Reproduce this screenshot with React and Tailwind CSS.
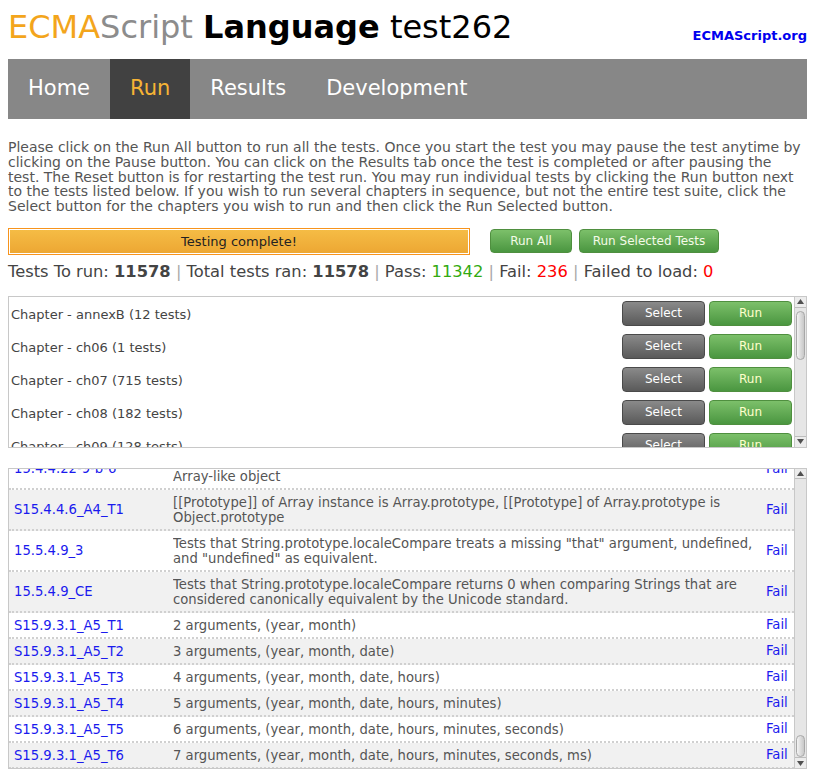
import React from "react";

const chapters = [
  "Chapter - annexB (12 tests)",
  "Chapter - ch06 (1 tests)",
  "Chapter - ch07 (715 tests)",
  "Chapter - ch08 (182 tests)",
  "Chapter - ch09 (128 tests)",
];

const results = [
  ["15.4.4.22-9-b-6", ["Array.prototype.reduceRight - modifications to length will change number of iterations on an", "Array-like object"], false],
  ["S15.4.4.6_A4_T1", ["[[Prototype]] of Array instance is Array.prototype, [[Prototype] of Array.prototype is", "Object.prototype"], true],
  ["15.5.4.9_3", ["Tests that String.prototype.localeCompare treats a missing \"that\" argument, undefined,", "and \"undefined\" as equivalent."], false],
  ["15.5.4.9_CE", ["Tests that String.prototype.localeCompare returns 0 when comparing Strings that are", "considered canonically equivalent by the Unicode standard."], true],
  ["S15.9.3.1_A5_T1", ["2 arguments, (year, month)"], false],
  ["S15.9.3.1_A5_T2", ["3 arguments, (year, month, date)"], true],
  ["S15.9.3.1_A5_T3", ["4 arguments, (year, month, date, hours)"], false],
  ["S15.9.3.1_A5_T4", ["5 arguments, (year, month, date, hours, minutes)"], true],
  ["S15.9.3.1_A5_T5", ["6 arguments, (year, month, date, hours, minutes, seconds)"], false],
  ["S15.9.3.1_A5_T6", ["7 arguments, (year, month, date, hours, minutes, seconds, ms)"], true],
];

function Scrollbar({ thumbTop, thumbHeight }) {
  return (
    <div className="w-[12px] flex flex-col bg-[#e6e6e6] border-l border-[#c8c8c8]">
      <div className="h-[11px] flex items-center justify-center bg-[#ececec] border-b border-[#bdbdbd]">
        <svg width="7" height="5" viewBox="0 0 7 5"><path d="M3.5 0L7 5H0z" fill="#505050" /></svg>
      </div>
      <div className="flex-1 flex flex-col px-[1px]">
        <div style={{ height: thumbTop }} />
        <div
          className="rounded-[5px] border border-[#a8a8a8] bg-gradient-to-r from-[#f4f4f4] via-[#dcdcdc] to-[#c8c8c8]"
          style={{ height: thumbHeight }}
        />
        <div className="flex-1" />
      </div>
      <div className="h-[11px] flex items-center justify-center bg-[#ececec] border-t border-[#bdbdbd]">
        <svg width="7" height="5" viewBox="0 0 7 5"><path d="M0 0H7L3.5 5z" fill="#505050" /></svg>
      </div>
    </div>
  );
}

export default function App() {
  const font = { fontFamily: '"DejaVu Sans", Verdana, sans-serif' };
  return (
    <div className="bg-white w-[815px] h-[780px] overflow-hidden px-[8px] text-[#444]" style={font}>
      {/* Header */}
      <div className="flex items-start justify-between h-[59px]">
        <div className="text-[32px] leading-none pt-[11px] whitespace-nowrap">
          <span className="text-[#f3a51c]">ECMA</span>
          <span className="text-[#8c8c8c]">Script</span>{" "}
          <span className="text-black font-bold">Language</span>{" "}
          <span className="text-black">test262</span>
        </div>
        <a className="text-[13px] font-bold text-[#0000ee] mt-[29px] leading-none" href="#">ECMAScript.org</a>
      </div>

      {/* Nav */}
      <div className="flex h-[60px] bg-[#878787]">
        <div className="px-[20px] flex items-center text-[21px] text-white">Home</div>
        <div className="px-[20px] flex items-center text-[21px] text-[#f5b335] bg-[#414141]">Run</div>
        <div className="px-[20px] flex items-center text-[21px] text-white">Results</div>
        <div className="px-[20px] flex items-center text-[21px] text-white">Development</div>
      </div>

      {/* Description */}
      <p className="mt-[21px] text-[14px] leading-[14.75px] text-[#555]">
        Please click on the Run All button to run all the tests. Once you start the test you may pause the test anytime by
        clicking on the Pause button. You can click on the Results tab once the test is completed or after pausing the
        test. The Reset button is for restarting the test run. You may run individual tests by clicking the Run button next
        to the tests listed below. If you wish to run several chapters in sequence, but not the entire test suite, click the
        Select button for the chapters you wish to run and then click the Run Selected button.
      </p>

      {/* Status & buttons */}
      <div className="flex items-center mt-[14px]">
        <div className="w-[462px] h-[27px] border border-[#f7941d] p-[1px]">
          <div className="h-full bg-gradient-to-b from-[#f5bc45] to-[#eda733] flex items-center justify-center text-[13px] text-[#222]">
            Testing complete!
          </div>
        </div>
        <button className="ml-[20px] w-[82px] h-[24px] rounded-[4px] border border-[#4f8f3f] bg-gradient-to-b from-[#7cc06a] to-[#4a9640] text-[12px] text-[#f4fbe8]">
          Run All
        </button>
        <button className="ml-[7px] w-[140px] h-[24px] rounded-[4px] border border-[#4f8f3f] bg-gradient-to-b from-[#7cc06a] to-[#4a9640] text-[12px] text-[#f4fbe8]">
          Run Selected Tests
        </button>
      </div>

      <div className="mt-[7px] text-[16.3px] leading-[20px] text-[#444] whitespace-nowrap">
        Tests To run: <b>11578</b> <span className="text-[#aaa]">|</span> Total tests ran: <b>11578</b>{" "}
        <span className="text-[#aaa]">|</span> Pass: <span className="text-[#33aa11]">11342</span>{" "}
        <span className="text-[#aaa]">|</span> Fail: <span className="text-[#ff0000]">236</span>{" "}
        <span className="text-[#aaa]">|</span> Failed to load: <span className="text-[#ff0000]">0</span>
      </div>

      {/* Chapters panel */}
      <div className="mt-[14px] h-[152px] border border-[#c8c8c8] flex">
        <div className="flex-1 overflow-hidden">
          {chapters.map((c) => (
            <div key={c} className="h-[33px] flex items-center pl-[2px] pr-[2px]">
              <div className="flex-1 text-[13px] text-[#444] pt-[2px]">{c}</div>
              <button className="w-[83px] h-[25px] rounded-[4px] border border-[#4a4a4a] bg-gradient-to-b from-[#8a8a8a] to-[#5a5a5a] text-[12px] text-white">
                Select
              </button>
              <button className="ml-[4px] w-[83px] h-[25px] rounded-[4px] border border-[#4f8f3f] bg-gradient-to-b from-[#7cc06a] to-[#4a9640] text-[12px] text-[#ffffcc]">
                Run
              </button>
            </div>
          ))}
        </div>
        <Scrollbar thumbTop={3} thumbHeight={49} />
      </div>

      {/* Results panel */}
      <div className="mt-[20px] h-[301px] border border-[#c8c8c8] border-r-0 flex">
        <div className="flex-1 overflow-hidden">
          <div className="mt-[-20px]">
            {results.map(([id, desc, gray]) => (
              <div
                key={id}
                className={
                  "flex border-b-2 border-dotted border-[#d0d0d0] text-[13.2px] leading-[15px] " +
                  (gray ? "bg-[#f1f1f1]" : "bg-white")
                }
              >
                <div className="w-[164px] pl-[5px] pt-[5px] pb-[4px] flex items-center text-[#1a1aee]">{id}</div>
                <div className="flex-1 pt-[5px] pb-[4px] text-[#555] whitespace-nowrap overflow-hidden">
                  {desc.map((d, i) => (
                    <div key={i}>{d}</div>
                  ))}
                </div>
                <div className="w-[28px] flex items-center text-[#1a1aee]">Fail</div>
              </div>
            ))}
          </div>
        </div>
        <div className="border-r border-[#c8c8c8] flex">
          <Scrollbar thumbTop={256} thumbHeight={22} />
        </div>
      </div>
    </div>
  );
}
